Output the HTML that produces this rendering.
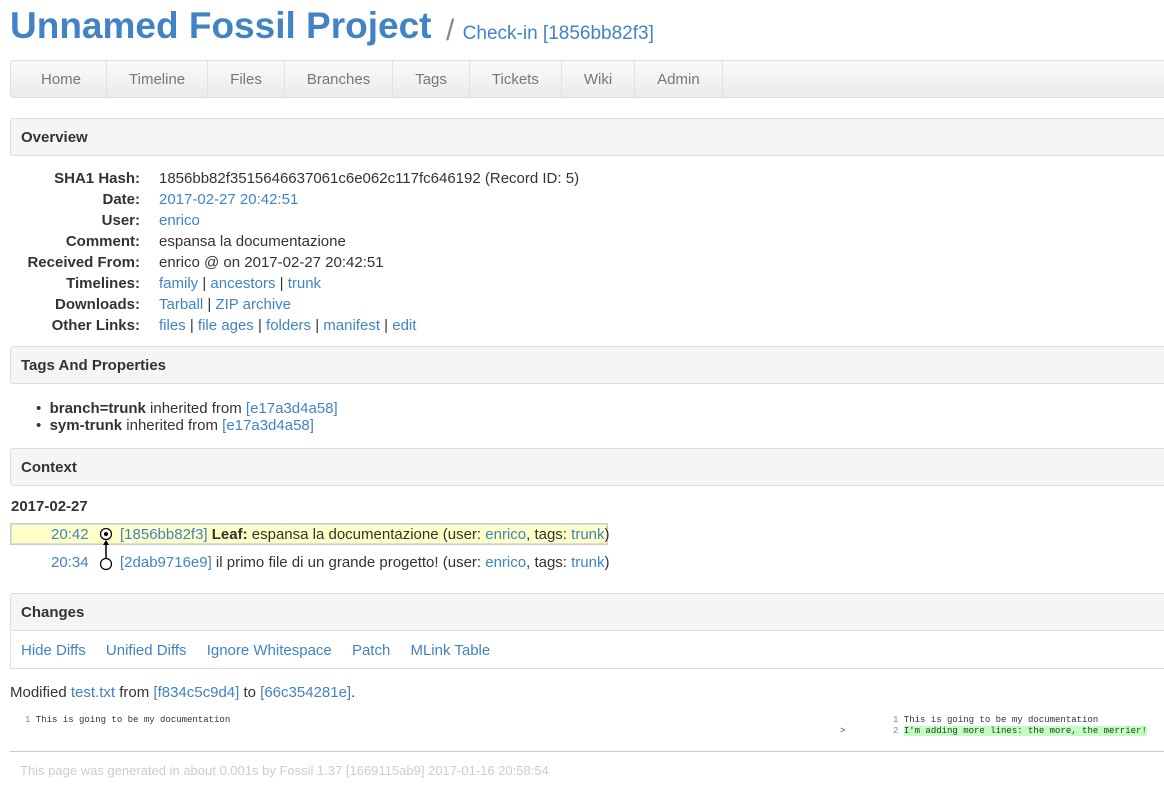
<!DOCTYPE html>
<html><head><style>
body{margin:0;font-family:"Liberation Sans",sans-serif;font-size:15px;color:#333;background:#fff;width:1164px;height:791px;overflow:hidden;position:relative}
a{color:#4183c4;text-decoration:none}
.abs{position:absolute;white-space:nowrap}
.title{left:10px;top:5px;font-size:37px;font-weight:bold;color:#4183c4}
.sub{left:446px;top:14px;font-size:30px;color:#888}
.nav{left:10px;top:60px;width:1170px;height:36px;border:1px solid #ddd;border-radius:4px;background:linear-gradient(#fafafa,#ebebeb);display:flex}
.nav div{padding:0 22px;line-height:38px;color:#777;border-right:1px solid #e2e2e2}
.hdr{left:10px;width:1170px;height:36px;border:1px solid #ddd;border-radius:3px 0 0 3px;background:#f5f5f5;font-weight:bold;line-height:38px;text-indent:10px}
.box{left:10px;width:1170px;border:1px solid #ddd;border-top:none}
.lbl{width:130px;text-align:right;font-weight:bold;left:10px}
.row{left:159px}
.mono{font-family:"Liberation Mono",monospace;font-size:9px}
.chg a{margin-right:16px}
</style></head><body>
<div class="abs title">Unnamed Fossil Project</div>
<div class="abs sub">/ <a style="font-size:19px;vertical-align:1px">Check-in [1856bb82f3]</a></div>
<div class="abs nav"><div style="padding:0 25px 0 30px">Home</div><div>Timeline</div><div>Files</div><div>Branches</div><div>Tags</div><div>Tickets</div><div>Wiki</div><div>Admin</div></div>

<div class="abs hdr" style="top:118px">Overview</div>
<div class="abs lbl" style="top:170px">SHA1 Hash:</div><div class="abs row" style="top:170px">1856bb82f3515646637061c6e062c117fc646192 (Record ID: 5)</div>
<div class="abs lbl" style="top:191px">Date:</div><div class="abs row" style="top:191px"><a>2017-02-27 20:42:51</a></div>
<div class="abs lbl" style="top:212px">User:</div><div class="abs row" style="top:212px"><a>enrico</a></div>
<div class="abs lbl" style="top:233px">Comment:</div><div class="abs row" style="top:233px">espansa la documentazione</div>
<div class="abs lbl" style="top:254px">Received From:</div><div class="abs row" style="top:254px">enrico @ on 2017-02-27 20:42:51</div>
<div class="abs lbl" style="top:275px">Timelines:</div><div class="abs row" style="top:275px"><a>family</a> | <a>ancestors</a> | <a>trunk</a></div>
<div class="abs lbl" style="top:296px">Downloads:</div><div class="abs row" style="top:296px"><a>Tarball</a> | <a>ZIP archive</a></div>
<div class="abs lbl" style="top:317px">Other Links:</div><div class="abs row" style="top:317px"><a>files</a> | <a>file ages</a> | <a>folders</a> | <a>manifest</a> | <a>edit</a></div>

<div class="abs hdr" style="top:346px">Tags And Properties</div>
<div class="abs" style="left:36px;top:400px">•&nbsp; <b>branch=trunk</b> inherited from <a>[e17a3d4a58]</a></div>
<div class="abs" style="left:36px;top:417px">•&nbsp; <b>sym-trunk</b> inherited from <a>[e17a3d4a58]</a></div>

<div class="abs hdr" style="top:448px">Context</div>
<div class="abs" style="left:11px;top:498px;font-weight:bold">2017-02-27</div>
<div class="abs" style="left:10px;top:523px;width:596px;height:20px;background:#ffffc8;border:1px solid #ccc;box-shadow:0 0 0 1px #ddd inset"></div>
<div class="abs" style="left:51px;top:526px"><a>20:42</a></div>
<div class="abs" style="left:120px;top:526px"><a>[1856bb82f3]</a> <b>Leaf:</b> espansa la documentazione (user: <a>enrico</a>, tags: <a>trunk</a>)</div>
<div class="abs" style="left:51px;top:554px"><a>20:34</a></div>
<div class="abs" style="left:120px;top:554px"><a>[2dab9716e9]</a> il primo file di un grande progetto! (user: <a>enrico</a>, tags: <a>trunk</a>)</div>
<svg class="abs" style="left:98px;top:526px" width="16" height="46"><circle cx="8" cy="8" r="5.5" fill="#fff" stroke="#000" stroke-width="1.2"/><circle cx="8" cy="8" r="2" fill="#000"/><line x1="8" y1="15" x2="8" y2="32" stroke="#000" stroke-width="1.5"/><path d="M5 19 L8 14 L11 19Z" fill="#000"/><circle cx="8" cy="38" r="5.5" fill="#fff" stroke="#000" stroke-width="1.2"/></svg>

<div class="abs hdr" style="top:593px">Changes</div>
<div class="abs box" style="top:630px;height:38px"></div>
<div class="abs chg" style="left:21px;top:642px"><a>Hide Diffs</a> <a>Unified Diffs</a> <a>Ignore Whitespace</a> <a>Patch</a> <a>MLink Table</a></div>
<div class="abs" style="left:10px;top:684px">Modified <a>test.txt</a> from <a>[f834c5c9d4]</a> to <a>[66c354281e]</a>.</div>
<div class="abs mono" style="left:25px;top:715px"><span style="color:#888">1</span> This is going to be my documentation</div>
<div class="abs mono" style="left:840px;top:726px">&gt;</div>
<div class="abs mono" style="left:893px;top:715px"><span style="color:#888">1</span> This is going to be my documentation</div>
<div class="abs mono" style="left:893px;top:726px"><span style="color:#888">2</span> <span style="background:#c0ffc0">I'm adding more lines: the more, the merrier!</span></div>
<div class="abs" style="left:10px;top:751px;width:1160px;border-top:1px solid #ccc"></div>
<div class="abs" style="left:20px;top:763px;font-size:13px;color:#ccc">This page was generated in about 0.001s by Fossil 1.37 [1669115ab9] 2017-01-16 20:58:54</div>
</body></html>
